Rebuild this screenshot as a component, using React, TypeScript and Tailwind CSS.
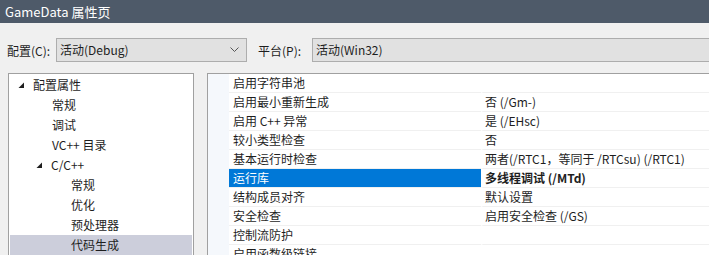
import React from 'react';

const FONT = { fontFamily: '"Noto Sans CJK SC", "Noto Sans", sans-serif' };

type TreeItem = { label: string; level: number; expanded?: boolean; selected?: boolean };

const tree: TreeItem[] = [
  { label: '配置属性', level: 0, expanded: true },
  { label: '常规', level: 1 },
  { label: '调试', level: 1 },
  { label: 'VC++ 目录', level: 1 },
  { label: 'C/C++', level: 1, expanded: true },
  { label: '常规', level: 2 },
  { label: '优化', level: 2 },
  { label: '预处理器', level: 2 },
  { label: '代码生成', level: 2, selected: true },
];

const props: { name: string; value: string; selected?: boolean }[] = [
  { name: '启用字符串池', value: '' },
  { name: '启用最小重新生成', value: '否 (/Gm-)' },
  { name: '启用 C++ 异常', value: '是 (/EHsc)' },
  { name: '较小类型检查', value: '否' },
  { name: '基本运行时检查', value: '两者(/RTC1，等同于 /RTCsu) (/RTC1)' },
  { name: '运行库', value: '多线程调试 (/MTd)', selected: true },
  { name: '结构成员对齐', value: '默认设置' },
  { name: '安全检查', value: '启用安全检查 (/GS)' },
  { name: '控制流防护', value: '' },
  { name: '启用函数级链接', value: '' },
];

const Expander = () => (
  <svg width="7" height="7" viewBox="0 0 7 7" className="shrink-0">
    <polygon points="6,0.5 6,6 0.5,6" fill="#1e1e1e" />
  </svg>
);

const TreeRow: React.FC<{ item: TreeItem }> = ({ item }) => {
  const indent = item.level === 0 ? 'pl-[8px]' : item.level === 1 ? (item.expanded ? 'pl-[26px]' : 'pl-[42px]') : 'pl-[61px]';
  return (
    <div className={`flex h-[20px] items-center ${indent} ${item.selected ? 'bg-[#cccedb]' : ''}`}>
      {item.expanded && (
        <span className="mr-[5px] flex w-[10px] items-center">
          <Expander />
        </span>
      )}
      <span className="whitespace-nowrap text-[12px] text-[#1e1e1e]">{item.label}</span>
    </div>
  );
};

const App: React.FC = () => {
  return (
    <div className="h-[255px] w-[709px] overflow-hidden bg-[#f0f0f0]" style={FONT}>
      <div className="flex h-[23px] items-center bg-[#4e5a69] pl-[5px] text-[13px] text-white">
        GameData 属性页
      </div>

      <div className="flex h-[50px] items-start pt-[15px] text-[12px] text-[#1e1e1e]">
        <span className="w-[56px] pl-[7px] pt-[4px] whitespace-nowrap">配置(C):</span>
        <div className="flex h-[24px] w-[191px] items-center justify-between border border-[#adadad] bg-[#e1e1e1] pl-[3px] pr-[7px]">
          <span>活动(Debug)</span>
          <svg width="9" height="6" viewBox="0 0 9 6">
            <polyline points="0.5,0.5 4.5,4.5 8.5,0.5" fill="none" stroke="#555" strokeWidth="1" />
          </svg>
        </div>
        <span className="w-[65px] pl-[11px] pt-[4px] whitespace-nowrap">平台(P):</span>
        <div className="flex h-[24px] flex-1 items-center border border-r-0 border-[#adadad] bg-[#e1e1e1] pl-[3px]">
          <span>活动(Win32)</span>
        </div>
      </div>

      <div className="flex items-start">
        <div className="ml-[8px] h-[190px] w-[186px] border border-[#a0a0a0] bg-white px-[1px] pt-[1px]">
          {tree.map((item, i) => (
            <TreeRow key={i} item={item} />
          ))}
        </div>

        <div className="ml-[13px] h-[190px] flex-1 border border-r-0 border-[#a0a0a0] bg-white">
          <div className="flex">
            <div className="w-[21px] shrink-0 bg-[#f5f8fc]" />
            <div className="flex-1">
              {props.map((p, i) => (
                <div key={i} className="flex h-[19px] text-[12px]">
                  <div
                    className={`flex w-[252px] items-center border-b border-[#f0f0f0] pl-[4px] whitespace-nowrap ${
                      p.selected ? 'bg-[#0078d7] text-white' : 'text-[#1e1e1e]'
                    }`}
                  >
                    {p.name}
                  </div>
                  <div
                    className={`flex flex-1 items-center border-b border-l-2 border-[#f0f0f0] border-l-white pl-[2px] whitespace-nowrap text-[#1e1e1e] ${
                      p.selected ? 'font-bold' : ''
                    }`}
                  >
                    {p.value}
                  </div>
                </div>
              ))}
            </div>
          </div>
        </div>
      </div>
    </div>
  );
};

export default App;
